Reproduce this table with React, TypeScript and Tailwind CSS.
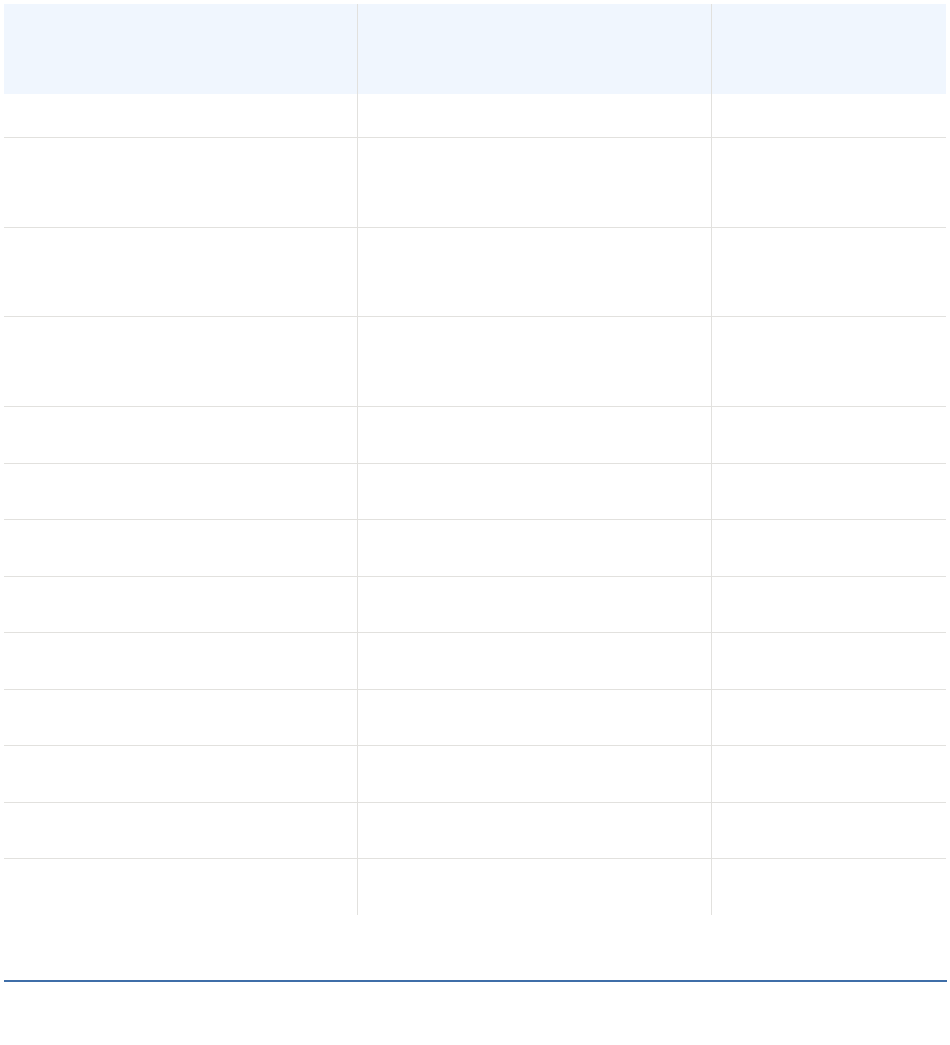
const rows = [
  { h: 'h-[44px]', border: true },
  { h: 'h-[90px]', border: true },
  { h: 'h-[89px]', border: true },
  { h: 'h-[90px]', border: true },
  { h: 'h-[57px]', border: true },
  { h: 'h-[56px]', border: true },
  { h: 'h-[57px]', border: true },
  { h: 'h-[56px]', border: true },
  { h: 'h-[57px]', border: true },
  { h: 'h-[56px]', border: true },
  { h: 'h-[57px]', border: true },
  { h: 'h-[56px]', border: true },
  { h: 'h-[56px]', border: false },
];

export default function App() {
  return (
    <div className="min-h-screen bg-white p-1 font-['Liberation_Sans',sans-serif] text-sm text-gray-800">
      {/* Table */}
      <div className="w-[942px]">
        <div className="grid h-[90px] grid-cols-[3fr_3fr_2fr] bg-[#f0f6fe]">
          <div />
          <div className="border-l border-[#e2e1de]" />
          <div className="border-l border-[#e2e1de]" />
        </div>
        {rows.map((r, i) => (
          <div
            key={i}
            className={`grid grid-cols-[3fr_3fr_2fr] ${r.h} ${r.border ? 'border-b border-[#e2e1de]' : ''}`}
          >
            <div />
            <div className="border-l border-[#e2e1de]" />
            <div className="border-l border-[#e2e1de]" />
          </div>
        ))}
      </div>

      {/* Footer rule */}
      <div className="mt-[65px] h-[2px] w-[943px] bg-[#3f6ea8]" />
    </div>
  );
}
